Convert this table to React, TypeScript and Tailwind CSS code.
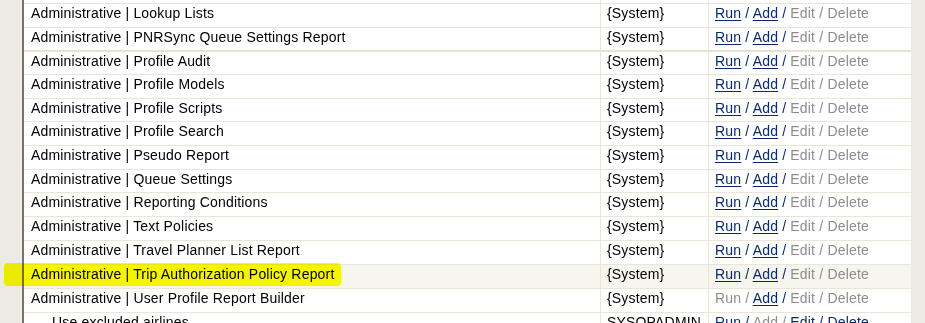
import React from "react";

type Row = {
  name: string;
  owner: string;
  h: string;
  run: boolean;
  add: boolean;
  edit: boolean;
  del: boolean;
  indent?: boolean;
  thick?: boolean;
  hover?: boolean;
};

const rows: Row[] = [
  { name: "Administrative | Lookup Lists", owner: "{System}", h: "h-[24px]", run: true, add: true, edit: false, del: false },
  { name: "Administrative | PNRSync Queue Settings Report", owner: "{System}", h: "h-[24px]", run: true, add: true, edit: false, del: false, thick: true },
  { name: "Administrative | Profile Audit", owner: "{System}", h: "h-[23px]", run: true, add: true, edit: false, del: false },
  { name: "Administrative | Profile Models", owner: "{System}", h: "h-[24px]", run: true, add: true, edit: false, del: false },
  { name: "Administrative | Profile Scripts", owner: "{System}", h: "h-[23px]", run: true, add: true, edit: false, del: false },
  { name: "Administrative | Profile Search", owner: "{System}", h: "h-[24px]", run: true, add: true, edit: false, del: false },
  { name: "Administrative | Pseudo Report", owner: "{System}", h: "h-[24px]", run: true, add: true, edit: false, del: false },
  { name: "Administrative | Queue Settings", owner: "{System}", h: "h-[23px]", run: true, add: true, edit: false, del: false },
  { name: "Administrative | Reporting Conditions", owner: "{System}", h: "h-[24px]", run: true, add: true, edit: false, del: false },
  { name: "Administrative | Text Policies", owner: "{System}", h: "h-[24px]", run: true, add: true, edit: false, del: false },
  { name: "Administrative | Travel Planner List Report", owner: "{System}", h: "h-[24px]", run: true, add: true, edit: false, del: false },
  { name: "Administrative | Trip Authorization Policy Report", owner: "{System}", h: "h-[24px]", run: true, add: true, edit: false, del: false, hover: true },
  { name: "Administrative | User Profile Report Builder", owner: "{System}", h: "h-[24px]", run: false, add: true, edit: false, del: false },
  { name: "Use excluded airlines", owner: "SYSOPADMIN", h: "h-[24px]", run: true, add: false, edit: true, del: true, indent: true },
];

function Act({ label, on }: { label: string; on: boolean }) {
  return on ? (
    <span className="text-[#0b2a6b] underline decoration-1 underline-offset-[2px]">{label}</span>
  ) : (
    <span className="text-[#8c8c8c]">{label}</span>
  );
}

function Sep({ on }: { on: boolean }) {
  return <span className={on ? "text-[#0b2a6b]" : "text-[#8c8c8c]"}> / </span>;
}

export default function App() {
  return (
    <div
      className="relative flex h-[323px] w-[925px] overflow-hidden bg-[#eceae3] text-[14px] tracking-[0.18px] text-black"
      style={{ fontFamily: '"Liberation Sans", Arial, sans-serif' }}
    >
      <div className="w-[22px] shrink-0 bg-[#eceae3]" />
      <div className="w-[2px] shrink-0 bg-[#75746a]" />
      <div className="flex w-[887px] shrink-0 flex-col bg-white">
        <div className="h-[4px] shrink-0 border-b border-[#ebe5d9] flex">
          <div className="w-[577px] border-r border-[#ebe5d9]" />
          <div className="w-[108px] border-r border-[#ebe5d9]" />
        </div>
        {rows.map((r, i) => (
          <div
            key={i}
            className={`flex shrink-0 ${r.h} ${r.thick ? "border-b-2 border-[#e8e1d2]" : "border-b border-[#ebe5d9]"} ${r.hover ? "bg-[#f6f5ee]" : ""}`}
          >
            <div
              className={`w-[577px] shrink-0 border-r border-[#ebe5d9] pt-[1px] leading-[16px] whitespace-nowrap ${r.indent ? "pl-[28px]" : "pl-[7px]"}`}
            >
              {r.name}
            </div>
            <div className="w-[108px] shrink-0 border-r border-[#ebe5d9] pl-[6px] pt-[1px] leading-[16px] whitespace-nowrap">
              {r.owner}
            </div>
            <div className="flex-1 pl-[6px] pt-[1px] leading-[16px] whitespace-pre">
              <Act label="Run" on={r.run} />
              <Sep on={r.run} />
              <Act label="Add" on={r.add} />
              <Sep on={r.add} />
              <Act label="Edit" on={r.edit} />
              <Sep on={r.edit} />
              <Act label="Delete" on={r.del} />
            </div>
          </div>
        ))}
      </div>
      <div className="flex-1 bg-[#eceae3]" />
      <div className="pointer-events-none absolute left-[4px] top-[263px] h-[23px] w-[337px] rounded-[4px] bg-[#ffff00] mix-blend-multiply" />
    </div>
  );
}
